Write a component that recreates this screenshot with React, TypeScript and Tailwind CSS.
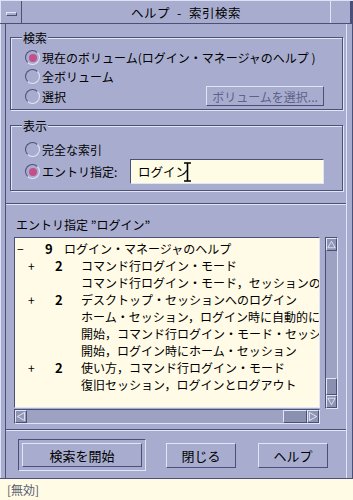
import React from 'react'

const raised = 'border border-t-[#e2e5f6] border-l-[#e2e5f6] border-r-[#4b5079] border-b-[#4b5079]'
const sunken = 'border border-t-[#4b5079] border-l-[#4b5079] border-r-[#e2e5f6] border-b-[#e2e5f6]'

type Row = { sign?: string; num?: string; text: string; level: number }

const rows: Row[] = [
  { sign: '−', num: '9', text: 'ログイン・マネージャのヘルプ', level: 0 },
  { sign: '+', num: '2', text: 'コマンド行ログイン・モード', level: 1 },
  { text: 'コマンド行ログイン・モード，セッションの', level: 1 },
  { sign: '+', num: '2', text: 'デスクトップ・セッションへのログイン', level: 1 },
  { text: 'ホーム・セッション，ログイン時に自動的に', level: 1 },
  { text: '開始，コマンド行ログイン・モード・セッシ', level: 1 },
  { text: '開始，ログイン時にホーム・セッション', level: 1 },
  { sign: '+', num: '2', text: '使い方，コマンド行ログイン・モード', level: 1 },
  { text: '復旧セッション，ログインとログアウト', level: 1 },
]

function Radio({ on = false }: { on?: boolean }) {
  return (
    <span className={`flex h-[15px] w-[15px] shrink-0 items-center justify-center rounded-full ${sunken}`}>
      {on && <span className="h-[8px] w-[8px] rounded-full bg-[#c4508a]" />}
    </span>
  )
}

function Group({ label, className, children }: { label: string; className: string; children: React.ReactNode }) {
  return (
    <div className={`relative ml-[4px] mr-[3px] border border-[#4b5079] shadow-[inset_1px_1px_0_#e2e5f6,1px_1px_0_#e2e5f6] ${className}`}>
      <span className="absolute -top-[9px] left-[11px] bg-[#a8adcf] px-[1px] leading-[17px]">{label}</span>
      {children}
    </div>
  )
}

function Arrow({ dir }: { dir: 'up' | 'down' | 'left' | 'right' }) {
  const pts = {
    up: '5.5,1.5 10,9.5 1,9.5',
    down: '1,1.5 10,1.5 5.5,9.5',
    left: '1.5,5.5 9.5,1 9.5,10',
    right: '1.5,1 9.5,5.5 1.5,10',
  }[dir]
  return (
    <svg width="11" height="11" viewBox="0 0 11 11">
      <polygon points={pts} fill="#9198b8" stroke="#eceef9" strokeWidth="1" />
    </svg>
  )
}

function Separator() {
  return <div className="h-[2px] border-t border-t-[#4b5079] border-b border-b-[#e2e5f6]" />
}

export default function App() {
  return (
    <div className="flex h-[500px] w-[353px] flex-col overflow-hidden bg-[#a8adcf] font-['Noto_Sans_CJK_JP',sans-serif] text-[12px] leading-[17px] text-black">
      {/* title bar */}
      <div className="flex h-[24px] shrink-0 border-b border-b-[#4b5079] border-t border-t-[#dfe2f4]">
        <div className="flex w-[22px] items-center justify-center border-r border-r-[#4b5079] border-l border-l-[#dfe2f4]">
          <span className={`mt-[3px] h-[4px] w-[11px] ${raised}`} />
        </div>
        <div className="flex flex-1 items-center justify-center gap-[7px] pl-[20px] text-[12.5px] tracking-[0.5px]">
          <span>ヘルプ</span>
          <span>-</span>
          <span>索引検索</span>
        </div>
        <div className="w-[23px] border-l border-l-[#e2e5f6] border-r-[3px] border-r-[#4b5079]" />
      </div>

      {/* body */}
      <div className="flex h-[454px] shrink-0 border-l border-l-[#dfe2f4] border-r border-r-[#4b5079] pl-[4px] pr-[5px]">
        <div className="flex flex-1 flex-col border-l border-l-[#4b5079] border-r border-r-[#e2e5f6]">
          <Group label="検索" className="mt-[13px] h-[73px] pl-[14px] pr-[18px] pt-[10px]">
            <div className="flex h-[19px] items-center gap-[2px]">
              <Radio on />
              <span>現在のボリューム(ログイン・マネージャのヘルプ )</span>
            </div>
            <div className="flex h-[19px] items-center gap-[2px]">
              <Radio />
              <span>全ボリューム</span>
            </div>
            <div className="flex h-[20px] items-center gap-[2px]">
              <Radio />
              <span>選択</span>
              <div className={`ml-auto flex h-[20px] w-[118px] items-center justify-center text-[#5d6288] ${raised}`}>
                ボリュームを選択...
              </div>
            </div>
          </Group>

          <Group label="表示" className="mt-[15px] h-[66px] pl-[14px] pr-[18px] pt-[14px]">
            <div className="flex h-[19px] items-center gap-[2px]">
              <Radio />
              <span>完全な索引</span>
            </div>
            <div className="flex h-[25px] items-center gap-[2px]">
              <Radio on />
              <span>エントリ指定:</span>
              <div className={`ml-auto flex h-[25px] w-[194px] items-center bg-[#fffce6] pl-[7px] ${sunken}`}>
                <span className="text-[12.5px]">ログイン</span>
                <svg width="7" height="20" viewBox="0 0 7 20" className="-ml-[4px]">
                  <path d="M0 1h7M0 19h7M3.5 1v18" stroke="#000" strokeWidth="1.6" fill="none" />
                </svg>
              </div>
            </div>
          </Group>

          <div className="mt-[12px]">
            <Separator />
          </div>

          <div className="mt-[11px] h-[17px] pl-[10px]">エントリ指定 ”ログイン”</div>

          <div className="ml-[8px] mt-[4px] flex">
            <div className="flex w-[306px] flex-col">
              <div className={`h-[171px] overflow-hidden bg-[#fffbe6] pt-[2px] ${sunken}`}>
                {rows.map((r, i) => (
                  <div key={i} className="flex h-[17px] items-center whitespace-nowrap">
                    {r.level === 0 ? (
                      <>
                        <span className="w-[30px] shrink-0 pl-[2px]">{r.sign}</span>
                        <span className="w-[19px] shrink-0 font-bold text-[13px]">{r.num}</span>
                      </>
                    ) : (
                      <>
                        <span className="w-[40px] shrink-0 pl-[13px]">{r.sign ?? ''}</span>
                        <span className="w-[26px] shrink-0 font-bold text-[13px]">{r.num ?? ''}</span>
                      </>
                    )}
                    <span>{r.text}</span>
                  </div>
                ))}
              </div>
              <div className={`mt-[1px] flex h-[15px] bg-[#9da2c3] ${sunken}`}>
                <div className={`flex w-[12px] items-center justify-center bg-[#8d93b3] ${raised}`}>
                  <Arrow dir="left" />
                </div>
                <div className="flex-1" />
                <div className={`w-[24px] bg-[#8a90af] ${raised}`} />
                <div className={`flex w-[12px] items-center justify-center bg-[#8d93b3] ${raised}`}>
                  <Arrow dir="right" />
                </div>
              </div>
            </div>
            <div className={`ml-[5px] flex h-[172px] w-[13px] flex-col bg-[#9da2c3] ${sunken}`}>
              <div className={`flex h-[13px] items-center justify-center bg-[#8d93b3] ${raised}`}>
                <Arrow dir="up" />
              </div>
              <div className="flex-1" />
              <div className={`h-[17px] bg-[#8a90af] ${raised}`} />
              <div className={`flex h-[13px] items-center justify-center bg-[#8d93b3] ${raised}`}>
                <Arrow dir="down" />
              </div>
            </div>
          </div>

          <div className="mt-[5px]">
            <Separator />
          </div>

          <div className="mt-[8px] flex h-[32px] items-center">
            <div className={`ml-[12px] h-[32px] w-[128px] p-[3px] ${sunken}`}>
              <div className={`flex h-full w-full items-center justify-center text-[13px] ${raised}`}>検索を開始</div>
            </div>
            <div className={`ml-[20px] flex h-[25px] w-[70px] items-center justify-center text-[13px] ${raised}`}>閉じる</div>
            <div className={`ml-[22px] flex h-[25px] w-[70px] items-center justify-center text-[13px] ${raised}`}>ヘルプ</div>
          </div>
        </div>
      </div>

      {/* status line */}
      <div className="flex flex-1 items-center border-t border-t-[#4b5079] bg-[#fffbe4] pl-[7px]">
        <span className="text-[#55596e]">[無効]</span>
      </div>
    </div>
  )
}
